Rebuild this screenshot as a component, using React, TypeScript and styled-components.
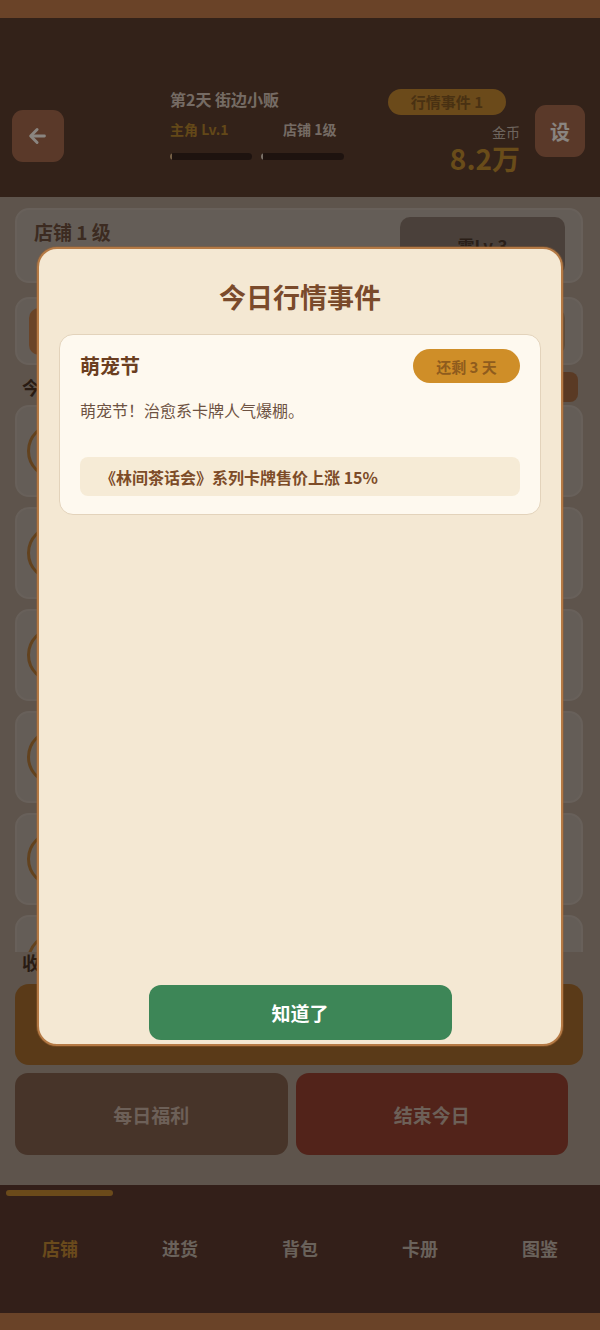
import React from "react";
import styled, { createGlobalStyle } from "styled-components";

const GlobalStyle = createGlobalStyle`
  html, body { margin: 0; padding: 0; background: #6a4328; }
  body { font-family: "Noto Sans CJK SC", "Noto Sans", sans-serif; }
  *, *::before, *::after { box-sizing: border-box; }
`;

const Screen = styled.div`
  width: 600px;
  height: 1330px;
  display: flex;
  flex-direction: column;
  background: #6a4328;
  overflow: hidden;
`;

const SafeBar = styled.div<{ $h: number }>`
  height: ${(p) => p.$h}px;
  flex-shrink: 0;
  background: #6a4328;
`;

const Frame = styled.div`
  position: relative;
  flex: 1;
  display: flex;
  flex-direction: column;
  min-height: 0;
`;

/* ---------- header ---------- */
const Header = styled.header`
  height: 179px;
  flex-shrink: 0;
  background: #5d3e2f;
  display: flex;
  align-items: center;
  padding: 71px 15px 27px 12px;
`;

const SquareButton = styled.button<{ $shift: number; $w: number }>`
  width: ${(p) => p.$w}px;
  height: 52px;
  margin-top: ${(p) => p.$shift}px;
  flex-shrink: 0;
  border: none;
  border-radius: 11px;
  background: #a5694c;
  color: #fbf3ea;
  font-family: inherit;
  font-size: 20px;
  font-weight: 700;
  display: flex;
  align-items: center;
  justify-content: center;
  padding: 0;
`;

const Info = styled.div`
  align-self: flex-start;
  margin-left: 106px;
  width: 176px;
  display: flex;
  flex-direction: column;
`;

const DayTitle = styled.div`
  font-size: 16px;
  font-weight: 700;
  line-height: 20px;
  color: #d6c4b6;
`;

const Stats = styled.div`
  display: grid;
  grid-template-columns: 82px 83px;
  column-gap: 9px;
  margin-top: 11px;
`;

const StatLabel = styled.div<{ $gold?: boolean; $indent?: number }>`
  font-size: 14px;
  font-weight: 700;
  line-height: 18px;
  padding-left: ${(p) => p.$indent ?? 0}px;
  color: ${(p) => (p.$gold ? "#b5832c" : "#d6c4b6")};
  white-space: nowrap;
`;

const Track = styled.div`
  height: 7px;
  margin-top: 15px;
  border-radius: 4px;
  background: #37241d;
  overflow: hidden;
`;

const Fill = styled.div<{ $color: string }>`
  height: 100%;
  background: ${(p) => p.$color};
  border-radius: 2px;
`;

const Spacer = styled.div`
  flex: 1;
`;

const Wallet = styled.div`
  align-self: flex-start;
  display: flex;
  flex-direction: column;
  align-items: flex-end;
  margin-right: 15px;
`;

const EventPill = styled.div`
  height: 26px;
  padding: 0 23px;
  margin-right: 14px;
  border-radius: 13px;
  background: #c38731;
  color: #865a22;
  font-size: 15px;
  font-weight: 700;
  line-height: 26px;
  white-space: nowrap;
`;

const CoinLabel = styled.div`
  margin-top: 9px;
  font-size: 14px;
  line-height: 16px;
  color: #c8b8ab;
`;

const CoinValue = styled.div`
  margin-top: 4px;
  font-size: 28px;
  font-weight: 700;
  line-height: 28px;
  color: #c08a2e;
`;

/* ---------- content ---------- */
const Content = styled.main`
  flex: 1;
  min-height: 0;
  background: #ab998a;
  padding: 11px 17px 0 15px;
  display: flex;
  flex-direction: column;
`;

const Card = styled.section<{ $h: number; $gap?: number }>`
  height: ${(p) => p.$h}px;
  margin-top: ${(p) => p.$gap ?? 0}px;
  flex-shrink: 0;
  border: 2px solid #bdb0a5;
  border-radius: 14px;
  background: #b6a99e;
  display: flex;
  align-items: center;
  padding: 0 16px 0 10px;
`;

const ShopText = styled.div`
  flex: 1;
  padding-left: 7px;
  display: flex;
  flex-direction: column;
`;

const ShopTitle = styled.div`
  font-size: 19px;
  font-weight: 700;
  line-height: 24px;
  color: #6e4f3c;
`;

const ShopSub = styled.div`
  font-size: 13px;
  line-height: 20px;
  color: #7f6656;
  margin-top: 8px;
`;

const UpgradeButton = styled.div`
  width: 165px;
  height: 58px;
  border-radius: 10px;
  background: #88766b;
  color: #4f3a2d;
  font-size: 17px;
  font-weight: 700;
  display: flex;
  align-items: center;
  justify-content: center;
`;

const ActionChip = styled.div<{ $bg: string }>`
  height: 47px;
  flex: 1;
  border-radius: 10px;
  background: ${(p) => p.$bg};
  color: #f1e2d5;
  font-size: 16px;
  font-weight: 700;
  display: flex;
  align-items: center;
  justify-content: center;
`;

const ChipRow = styled.div`
  flex: 1;
  display: flex;
  gap: 10px;
  padding-left: 2px;
`;

const SectionRow = styled.div<{ $h: number; $gap: number }>`
  height: ${(p) => p.$h}px;
  margin-top: ${(p) => p.$gap}px;
  flex-shrink: 0;
  display: flex;
  align-items: center;
  justify-content: space-between;
  padding-left: 7px;
  padding-right: 5px;
`;

const SectionTitle = styled.div`
  font-size: 18px;
  font-weight: 700;
  color: #4a3224;
`;

const SmallButton = styled.div`
  width: 80px;
  height: 30px;
  border-radius: 8px;
  background: #a46a42;
  color: #f1e2d5;
  font-size: 14px;
  font-weight: 700;
  display: flex;
  align-items: center;
  justify-content: center;
`;

const List = styled.div`
  margin-top: 3px;
  height: 547px;
  flex-shrink: 0;
  overflow: hidden;
  display: flex;
  flex-direction: column;
  gap: 10px;
`;

const ItemCard = styled.div`
  height: 92px;
  flex-shrink: 0;
  border: 2px solid #bdb0a5;
  border-radius: 14px;
  background: #b6a99e;
  display: flex;
  align-items: center;
  gap: 14px;
  padding: 0 14px 0 10px;
`;

const Avatar = styled.div`
  width: 56px;
  height: 56px;
  flex-shrink: 0;
  border-radius: 50%;
  border: 3px solid #b27838;
  background: transparent;
`;

const ItemName = styled.div`
  align-self: flex-start;
  padding-top: 16px;
  font-size: 16px;
  font-weight: 700;
  line-height: 20px;
  color: #5a4030;
`;

const BigButton = styled.div`
  height: 81px;
  margin-top: 10px;
  flex-shrink: 0;
  border-radius: 14px;
  background: #a46a2c;
`;

const ButtonRow = styled.div`
  width: 553px;
  margin-top: 8px;
  display: grid;
  grid-template-columns: 1fr 1fr;
  gap: 8px;
`;

const RowButton = styled.div<{ $bg: string }>`
  height: 82px;
  border-radius: 13px;
  background: ${(p) => p.$bg};
  color: #c6b0a0;
  font-size: 19px;
  font-weight: 700;
  display: flex;
  align-items: center;
  justify-content: center;
`;

/* ---------- bottom nav ---------- */
const Nav = styled.nav`
  height: 128px;
  flex-shrink: 0;
  background: #5d3a2f;
  display: grid;
  grid-template-columns: repeat(5, 1fr);
`;

const Tab = styled.div`
  display: flex;
  flex-direction: column;
  align-items: stretch;
`;

const TabBar = styled.div<{ $active: boolean }>`
  height: 6px;
  margin: 5px 7px 0 6px;
  border-radius: 3px;
  background: ${(p) => (p.$active ? "#c38731" : "transparent")};
`;

const TabLabel = styled.div<{ $active: boolean }>`
  margin-top: 40px;
  text-align: center;
  font-size: 18px;
  font-weight: 700;
  line-height: 24px;
  color: ${(p) => (p.$active ? "#c18733" : "#c1b2a7")};
`;

/* ---------- modal ---------- */
const Overlay = styled.div`
  position: absolute;
  inset: 0;
  background: rgba(0, 0, 0, 0.45);
  display: flex;
  justify-content: center;
  align-items: flex-start;
  padding-top: 229px;
`;

const Modal = styled.div`
  width: 526px;
  height: 799px;
  border: 2px solid #b57a45;
  border-radius: 20px;
  background: #f4e8d3;
  box-shadow: 0 0 0 1px rgba(160, 100, 50, 0.35);
  display: flex;
  flex-direction: column;
  padding: 30px 20px 4px;
`;

const ModalTitle = styled.h2`
  margin: 0;
  text-align: center;
  font-size: 27px;
  font-weight: 700;
  line-height: 36px;
  color: #7a4a2b;
`;

const EventCard = styled.div`
  margin-top: 19px;
  border: 1px solid #e3d3bb;
  border-radius: 14px;
  background: #fef9ef;
  padding: 14px 20px 18px;
  display: flex;
  flex-direction: column;
`;

const EventHead = styled.div`
  display: flex;
  align-items: center;
  justify-content: space-between;
`;

const EventName = styled.div`
  font-size: 20px;
  font-weight: 700;
  line-height: 26px;
  color: #6b3e20;
`;

const DaysPill = styled.div`
  width: 107px;
  height: 34px;
  border-radius: 17px;
  background: #cf8e28;
  color: #8f5c1d;
  font-size: 15px;
  font-weight: 700;
  display: flex;
  align-items: center;
  justify-content: center;
`;

const EventDesc = styled.p`
  margin: 17px 0 0;
  font-size: 16px;
  line-height: 20px;
  color: #6d5242;
`;

const EffectBox = styled.div`
  margin-top: 37px;
  height: 39px;
  border-radius: 8px;
  background: #f6ebd6;
  padding: 0 20px;
  display: flex;
  align-items: center;
  font-size: 16px;
  font-weight: 700;
  color: #7d4c28;
`;

const ConfirmButton = styled.button`
  margin: auto auto 0;
  width: 303px;
  height: 55px;
  border: none;
  border-radius: 12px;
  background: #3d8657;
  color: #ffffff;
  font-family: inherit;
  font-size: 19px;
  font-weight: 700;
`;

const ArrowLeft = () => (
  <svg width="22" height="22" viewBox="0 0 24 24" fill="none" stroke="currentColor" strokeWidth="3.2" strokeLinecap="round" strokeLinejoin="round">
    <path d="M19 12H5" />
    <path d="M11 5l-7 7 7 7" />
  </svg>
);

const tabs = ["店铺", "进货", "背包", "卡册", "图鉴"];
const items = ["松鼠茶会", "小鹿午后", "灯塔守望", "橘猫打盹", "柴犬散步", "钟楼黄昏"];

export default function App() {
  return (
    <>
      <GlobalStyle />
      <Screen>
        <SafeBar $h={18} />
        <Frame>
          <Header>
            <SquareButton $shift={13} $w={52} aria-label="返回">
              <ArrowLeft />
            </SquareButton>
            <Info>
              <DayTitle>第2天 街边小贩</DayTitle>
              <Stats>
                <StatLabel $gold>主角 Lv.1</StatLabel>
                <StatLabel $indent={22}>店铺 1级</StatLabel>
                <Track>
                  <Fill $color="#d8b080" style={{ width: "3%" }} />
                </Track>
                <Track>
                  <Fill $color="#e0d0c0" style={{ width: "3%" }} />
                </Track>
              </Stats>
            </Info>
            <Spacer />
            <Wallet>
              <EventPill>行情事件 1</EventPill>
              <CoinLabel>金币</CoinLabel>
              <CoinValue>8.2万</CoinValue>
            </Wallet>
            <SquareButton $shift={3} $w={50}>设</SquareButton>
          </Header>

          <Content>
            <Card $h={75}>
              <ShopText>
                <ShopTitle>店铺 1 级</ShopTitle>
                <ShopSub>· 货架 4 格</ShopSub>
              </ShopText>
              <UpgradeButton>需Lv.3</UpgradeButton>
            </Card>
            <Card $h={68} $gap={14}>
              <ChipRow>
                <ActionChip $bg="#c17d49">上架</ActionChip>
                <ActionChip $bg="#a88a70">整理</ActionChip>
                <ActionChip $bg="#a88a70">促销</ActionChip>
              </ChipRow>
            </Card>
            <SectionRow $h={30} $gap={7}>
              <SectionTitle>今日客人</SectionTitle>
              <SmallButton>刷新</SmallButton>
            </SectionRow>
            <List>
              {items.map((name) => (
                <ItemCard key={name}>
                  <Avatar />
                  <ItemName>{name}</ItemName>
                </ItemCard>
              ))}
            </List>
            <SectionRow $h={24} $gap={-2}>
              <SectionTitle>收银台</SectionTitle>
            </SectionRow>
            <BigButton />
            <ButtonRow>
              <RowButton $bg="#815f4c">每日福利</RowButton>
              <RowButton $bg="#954031">结束今日</RowButton>
            </ButtonRow>
          </Content>

          <Nav>
            {tabs.map((t, i) => (
              <Tab key={t}>
                <TabBar $active={i === 0} />
                <TabLabel $active={i === 0}>{t}</TabLabel>
              </Tab>
            ))}
          </Nav>

          <Overlay>
            <Modal>
              <ModalTitle>今日行情事件</ModalTitle>
              <EventCard>
                <EventHead>
                  <EventName>萌宠节</EventName>
                  <DaysPill>还剩 3 天</DaysPill>
                </EventHead>
                <EventDesc>萌宠节！治愈系卡牌人气爆棚。</EventDesc>
                <EffectBox>《林间茶话会》系列卡牌售价上涨 15%</EffectBox>
              </EventCard>
              <ConfirmButton>知道了</ConfirmButton>
            </Modal>
          </Overlay>
        </Frame>
        <SafeBar $h={17} />
      </Screen>
    </>
  );
}
